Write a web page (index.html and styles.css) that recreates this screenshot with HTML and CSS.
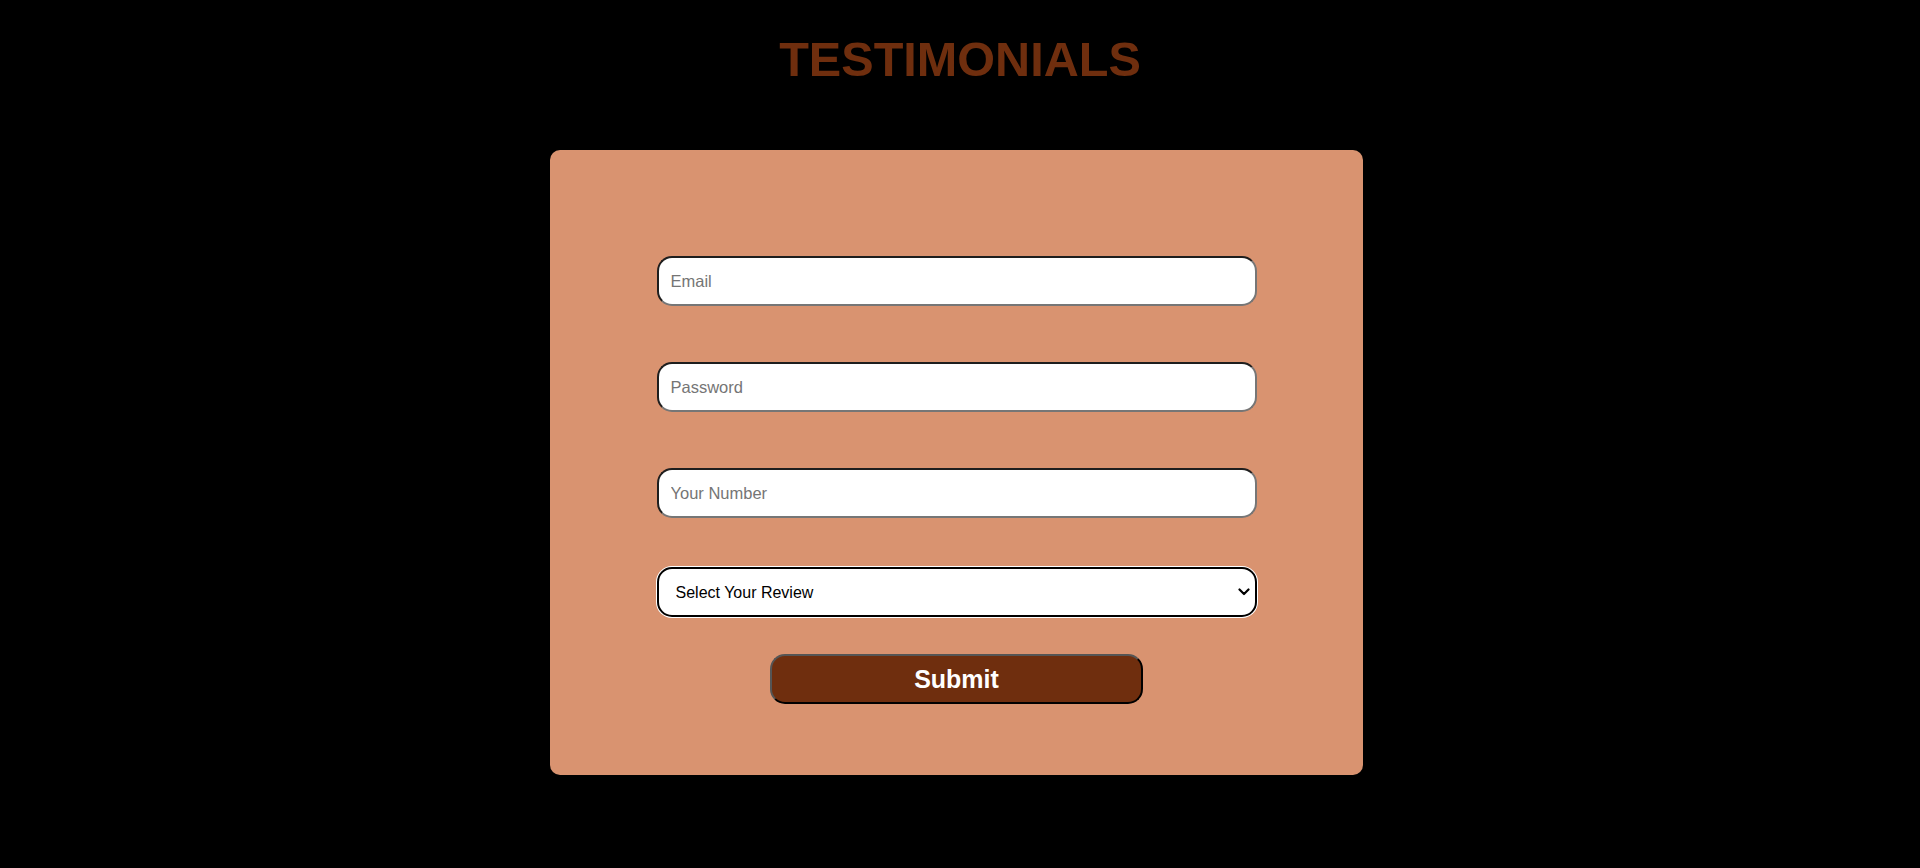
FILE: index.html
```html
<!DOCTYPE html>
<html lang="en">
<head>
<meta charset="utf-8">
<title>Testimonials</title>
<link rel="stylesheet" href="styles.css">
</head>
<body>
<h1 class="title">TESTIMONIALS</h1>
<div class="card">
  <form class="form">
    <input class="field" type="email" placeholder="Email">
    <input class="field field-gap" type="password" placeholder="Password">
    <input class="field field-gap" type="text" placeholder="Your Number">
    <div class="select-wrap">
      <select class="select">
        <option>Select Your Review</option>
        <option>Excellent</option>
        <option>Good</option>
        <option>Average</option>
        <option>Poor</option>
      </select>
      <svg class="chevron" width="12" height="8" viewBox="0 0 12 8"><path d="M1.5 1.5 L6 6 L10.5 1.5" fill="none" stroke="#000" stroke-width="2.2" stroke-linecap="round" stroke-linejoin="round"/></svg>
    </div>
    <button class="submit" type="button">Submit</button>
  </form>
</div>
</body>
</html>
```

FILE: styles.css
```css
html, body {
  margin: 0;
  padding: 0;
  background: #000;
}
body {
  font-family: "Liberation Sans", Arial, sans-serif;
}
.title {
  margin: 32px 0 0;
  text-align: center;
  font-size: 48.6px;
  font-weight: bold;
  color: #6f2e0e;
  line-height: 55px;
}
.card {
  margin: 63px 0 0 550px;
  width: 813px;
  height: 625px;
  box-sizing: border-box;
  background: #d99370;
  border-radius: 10px;
  padding-top: 106px;
}
.form {
  display: flex;
  flex-direction: column;
  align-items: center;
}
.field {
  box-sizing: border-box;
  width: 600px;
  height: 50px;
  margin: 0;
  padding: 0 12px;
  border-width: 2px;
  border-style: solid;
  border-color: #1e1e1e #767676 #767676 #1e1e1e;
  border-radius: 15px;
  background: #fff;
  font-family: "Liberation Sans", Arial, sans-serif;
  font-size: 16.5px;
  color: #000;
  outline: none;
}
.field::placeholder {
  color: #757575;
}
.field-gap {
  margin-top: 56px;
}
.select-wrap {
  position: relative;
  margin-top: 49px;
  width: 600px;
  height: 50px;
}
.select {
  -webkit-appearance: none;
  appearance: none;
  box-sizing: border-box;
  width: 600px;
  height: 50px;
  margin: 0;
  padding: 0 13px 0 17px;
  border: 2px solid #000;
  border-radius: 15px;
  box-shadow: 0 0 0 1px #fff;
  background: #fff;
  font-family: "Liberation Sans", Arial, sans-serif;
  font-size: 16px;
  color: #000;
  outline: none;
}
.chevron {
  position: absolute;
  right: 7px;
  top: 21px;
  pointer-events: none;
}
.submit {
  box-sizing: border-box;
  margin-top: 37px;
  width: 373px;
  height: 50px;
  border-width: 2px;
  border-style: solid;
  border-color: #555 #000 #000 #555;
  border-radius: 15px;
  background: #6f2e0e;
  color: #fff;
  font-family: "Liberation Sans", Arial, sans-serif;
  font-weight: bold;
  font-size: 25px;
  padding: 0;
  cursor: pointer;
}
```
